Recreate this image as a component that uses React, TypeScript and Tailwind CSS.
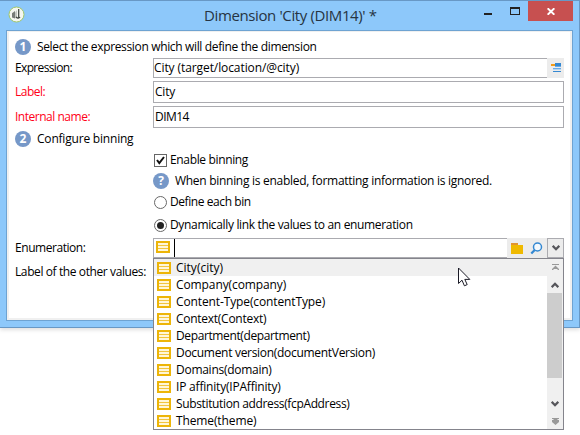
import type { ReactNode } from "react";

const enumerations = [
  { name: "City(city)", spacing: "tracking-[0px]" },
  { name: "Company(company)", spacing: "tracking-[-0.1px]" },
  { name: "Content-Type(contentType)", spacing: "tracking-[-0.12px]" },
  { name: "Context(Context)", spacing: "tracking-[-0.27px]" },
  { name: "Department(department)", spacing: "tracking-[-0.38px]" },
  { name: "Document version(documentVersion)", spacing: "tracking-[-0.3px]" },
  { name: "Domains(domain)", spacing: "tracking-[-0.27px]" },
  { name: "IP affinity(IPAffinity)", spacing: "tracking-[-0.2px]" },
  { name: "Substitution address(fcpAddress)", spacing: "tracking-[-0.36px]" },
  { name: "Theme(theme)", spacing: "tracking-[-0.12px]" },
];

function Badge({ children }: { children: ReactNode }) {
  return (
    <span className="flex size-4 shrink-0 items-center justify-center rounded-full bg-[#7698c8] text-[12px] leading-none font-bold tracking-normal text-white">
      {children}
    </span>
  );
}

function TableIcon() {
  return (
    <svg width="14" height="12" viewBox="0 0 14 12" shapeRendering="crispEdges" className="shrink-0">
      <rect width="14" height="12" fill="#edb508" />
      <rect x="2" y="2" width="10" height="8" fill="#fff6d8" />
      <path d="M2 4h10v1H2zM2 7h10v1H2z" fill="#f1c540" />
    </svg>
  );
}

function Chevron({ up = false }: { up?: boolean }) {
  return (
    <svg width="8" height="6" viewBox="0 0 8 6" className={up ? "rotate-180" : ""}>
      <path d="M.7 .9 4 4.2 7.3 .9" fill="none" stroke="#55555a" strokeWidth="2.3" />
    </svg>
  );
}

function Radio({ checked = false }: { checked?: boolean }) {
  return (
    <span className="flex size-[13px] shrink-0 items-center justify-center rounded-full border border-[#686868] bg-white">
      {checked && <span className="size-[7px] rounded-full bg-[#222]" />}
    </span>
  );
}

function TitleBar() {
  return (
    <header className="flex h-[29px] items-start">
      <svg width="17" height="17" viewBox="0 0 17 17" className="mt-[5px] ml-2 shrink-0">
        <circle cx="8.5" cy="8.5" r="7.5" fill="#f5f7f0" stroke="#a1c66a" strokeWidth="1" />
        <path d="M4 7.2 7 5v7.5l-3-1z" fill="#777b76" />
        <path d="M7 6.5 9 4v6.5l-2 2z" fill="#c3c6c0" />
        <path d="M10.7 3v9M8 10.8c1.5 1.8 3 1.8 4 .2" fill="none" stroke="#3b403b" strokeWidth="1.2" />
      </svg>
      <h1 className="ml-[179px] w-[240px] pt-[4px] text-[15px] leading-[21px] tracking-[-0.38px] text-[#263442]">
        Dimension 'City (DIM14)' *
      </h1>
      <div className="ml-auto flex">
        <span className="mt-3 h-[2px] w-2 bg-[#222]" />
        <span className="mt-[6px] ml-[18px] h-2 w-[10px] border border-t-2 border-[#222]" />
        <span className="ml-2 flex h-5 w-[45px] items-center justify-center bg-[#c75050]">
          <svg width="8" height="7" viewBox="0 0 8 7">
            <path d="m.6.3 6.8 6.4M7.4.3.6 6.7" stroke="white" strokeWidth="2" />
          </svg>
        </span>
        <span className="w-[6px]" />
      </div>
    </header>
  );
}

function Dropdown() {
  return (
    <div className="absolute top-[19px] -left-px z-10 flex h-[172px] w-[411px] border border-[#84848c] bg-white">
      <ul className="h-[170px] w-[393px]">
        {enumerations.map((item, index) => (
          <li key={item.name} className={"flex h-[17px] items-center pl-[3px] " + (index === 0 ? "bg-[#f0f0f0]" : "")}>
            <TableIcon />
            <span className={"ml-[5px] whitespace-nowrap " + item.spacing}>{item.name}</span>
          </li>
        ))}
      </ul>
      <div className="flex w-[16px] flex-col items-center bg-[#f0f0f0]">
        <svg width="7" height="6" viewBox="0 0 7 6" className="mt-[5px]">
          <path d="M0 .5h7" stroke="#999" />
          <path d="M3.5 1.5 7 5v1H5.5V5h-4v1H0V5z" fill="#999" />
        </svg>
        <span className="mt-[12px] flex h-[6px]"><Chevron up /></span>
        <span className="mt-[5px] h-[85px] w-full border-r border-[#f0f0f0] bg-[#cdcdcd]" />
        <span className="mt-[23px] flex h-[6px]"><Chevron /></span>
        <svg width="7" height="7" viewBox="0 0 7 7" className="mt-[11px]">
          <path d="M0 0h7v1H5.5v1H7v2L3.5 7 0 4V2h1.5V1H0z" fill="#999" />
        </svg>
      </div>
      <svg width="13" height="20" viewBox="0 0 13 20" className="absolute top-[8px] left-[304px]">
        <path d="M.5 1v15.5L4 13.2l2.4 5.6 2.8-1.2-2.4-5.2h5z" fill="white" stroke="#1b1b27" strokeWidth="1" />
      </svg>
    </div>
  );
}

export default function App() {
  return (
    <main className="h-[435px] w-[580px] overflow-hidden bg-white font-['Open_Sans','Noto_Sans',sans-serif] text-[12px] leading-4 text-black">
      <div className="flex h-[328px] w-[580px] flex-col border-t border-r border-b border-[#6898c5] bg-[#8dc8fa] shadow-[0_2px_4px_#00000020]">
        <TitleBar />
        <section className="ml-[6px] h-[291px] w-[567px] border border-[#6ea3d2] bg-[#f0f0f0] p-[2px] pt-[1px]">
          <div className="h-[286px] bg-white pl-[6px]">
            <div className="flex h-[26px] items-center pt-[3px]">
              <Badge>1</Badge>
              <span className="ml-[6px] tracking-[-0.35px]">Select the expression which will define the dimension</span>
            </div>
            <div className="flex h-5 items-center">
              <label className="w-[138px] tracking-[-0.65px]">Expression:</label>
              <div className="flex h-5 w-[411px] border border-r-0 border-[#ababb0]">
                <span className="flex-1 leading-[18px] tracking-[-0.09px]">City (target/location/@city)</span>
                <span className="-my-px flex w-[17px] items-center justify-center bg-[#ececec]">
                  <svg width="10" height="10" viewBox="0 0 10 10" shapeRendering="crispEdges">
                    <path d="M4 0h6v4H4z" fill="#3488d2" />
                    <path d="M4 3h6v1H4zM2 5h8v1H2z" fill="#69a9e4" />
                    <path d="M2 6h8v1H2z" fill="#b5d5f3" />
                    <path d="M2 8h8v1H2z" fill="#3488d2" />
                    <path d="M0 1h4v2H0z" fill="#f29b18" />
                  </svg>
                </span>
              </div>
            </div>
            <div className="mt-[3px] flex h-[22px] items-center text-[#ff0018]">
              <label className="w-[138px] tracking-[-0.5px]">Label:</label>
              <div className="h-[22px] w-[411px] border border-[#ababb0] pl-px leading-[19px] tracking-[-0.2px] text-black">City</div>
            </div>
            <div className="mt-[3px] flex h-[22px] items-center text-[#ff0018]">
              <label className="w-[138px] tracking-[-0.48px]">Internal name:</label>
              <div className="h-[22px] w-[411px] border border-[#ababb0] pl-px leading-[19px] tracking-[-0.55px] text-black">DIM14</div>
            </div>
            <div className="mt-[3px] flex h-4 items-center">
              <Badge>2</Badge>
              <span className="ml-[6px] tracking-[-0.2px]">Configure binning</span>
            </div>
            <div className="ml-[139px]">
              <div className="mt-[5px] flex h-4 items-center">
                <span className="flex size-[13px] items-center justify-center border border-[#666]">
                  <svg width="9" height="9" viewBox="0 0 9 9">
                    <path d="m1 4 2.3 3L8 1" fill="none" stroke="#111" strokeWidth="2" />
                  </svg>
                </span>
                <span className="ml-[3px] tracking-[-0.35px]">Enable binning</span>
              </div>
              <div className="mt-[5px] -ml-px flex h-4 items-center">
                <Badge>?</Badge>
                <span className="ml-[6px] tracking-[-0.29px]">When binning is enabled, formatting information is ignored.</span>
              </div>
              <div className="mt-[5px] flex h-4 items-center">
                <Radio />
                <span className="ml-[3px] tracking-[-0.42px]">Define each bin</span>
              </div>
              <div className="mt-[7px] flex h-4 items-center">
                <Radio checked />
                <span className="ml-[3px] tracking-[-0.34px]">Dynamically link the values to an enumeration</span>
              </div>
            </div>
            <div className="mt-[5px] flex h-5 items-center">
              <label className="w-[138px] tracking-[-0.45px]">Enumeration:</label>
              <div className="relative flex h-5 w-[411px] border border-[#ababb0]">
                <span className="mt-[2px] ml-[2px]"><TableIcon /></span>
                <span className="ml-[4px] h-[18px] w-px bg-black" />
                <span className="-my-px ml-auto flex w-[40px] items-center gap-[7px] bg-[#ececec] pl-[4px]">
                  <svg width="12" height="11" viewBox="0 0 12 11" shapeRendering="crispEdges">
                    <path d="M0 0h7v2H0z" fill="#e1942e" />
                    <path d="M0 2h12v9H0z" fill="#efb900" />
                  </svg>
                  <svg width="13" height="13" viewBox="0 0 13 13">
                    <circle cx="7.5" cy="5" r="4" fill="#f4f9fd" stroke="#3488d2" strokeWidth="1.5" />
                    <path d="M4.7 8 1.3 11.5" stroke="#3488d2" strokeWidth="2.3" />
                  </svg>
                </span>
                <span className="-my-px -mr-px flex w-[17px] items-center justify-center border border-[#ababb0] bg-[#ececec]"><Chevron /></span>
                <Dropdown />
              </div>
            </div>
            <div className="mt-[6px] h-4 tracking-[-0.4px]">Label of the other values:</div>
          </div>
        </section>
      </div>
    </main>
  );
}
